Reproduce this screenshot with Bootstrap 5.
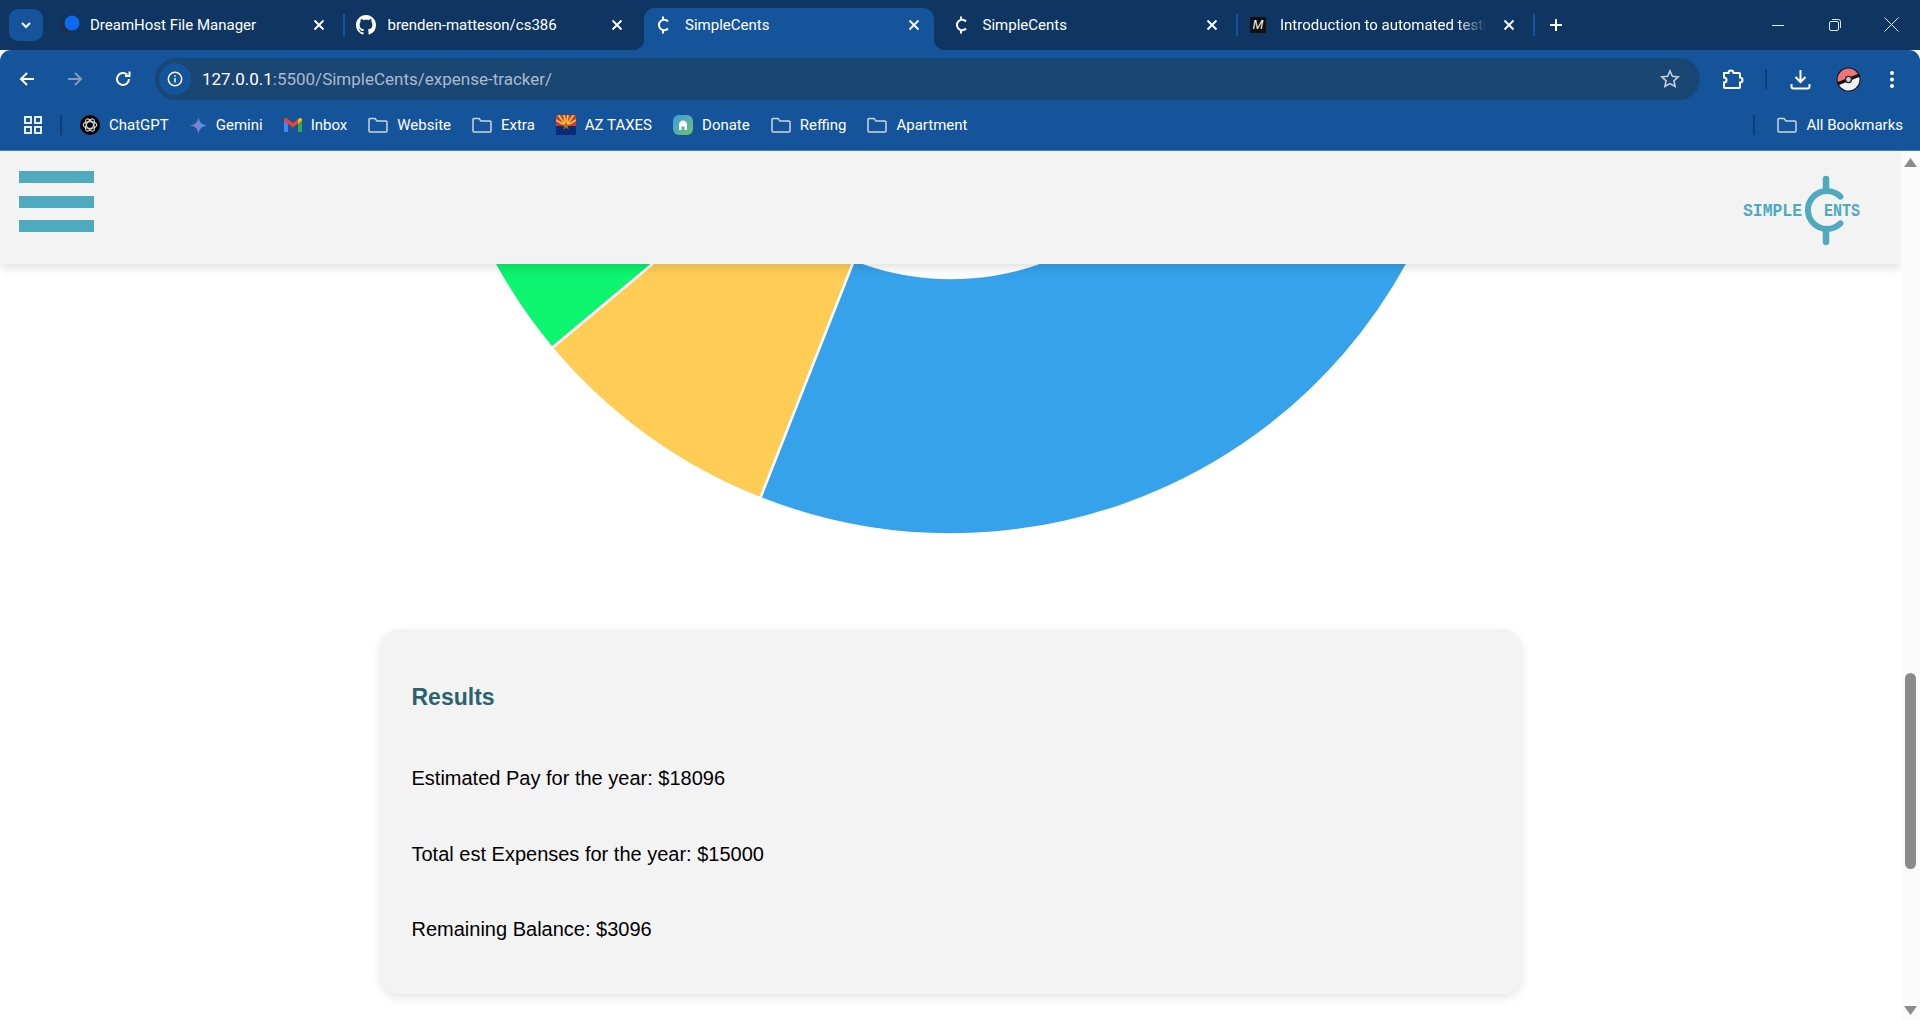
<!DOCTYPE html>
<html lang="en">
<head>
  <meta charset="UTF-8" />
  <title>SimpleCents</title>
  <link href="https://cdn.jsdelivr.net/npm/bootstrap@5.3.2/dist/css/bootstrap.min.css" rel="stylesheet" />
  <style>
    body { height: 1020px; overflow: hidden; background: #fff; font-family: "Liberation Sans", Arial, sans-serif; }

    /* browser chrome */
    .tab-strip { height: 50px; background: #0f3663; padding-left: 9px; color: #fff; font: 15px Roboto, sans-serif; }
    .tab-search { width: 34px; height: 32px; margin-top: 9px; margin-right: 6px; background: #15549a; border-radius: 9px; }
    .chrome-tab { width: 290px; height: 42px; margin-top: 8px; margin-right: 7.5px; padding: 0 14px 8px 11px; position: relative; flex: none; }
    .chrome-tab.now { background: #15549a; border-radius: 11px 11px 0 0; }
    .chrome-tab.now::before, .chrome-tab.now::after { content: ""; position: absolute; bottom: 0; width: 11px; height: 11px; }
    .chrome-tab.now::before { left: -11px; background: radial-gradient(circle at 0 0, transparent 11px, #15549a 11.5px); }
    .chrome-tab.now::after { right: -11px; background: radial-gradient(circle at 100% 0, transparent 11px, #15549a 11.5px); }
    .tab-ico { width: 16px; height: 20px; margin-right: 14px; flex: none; overflow: visible; }
    .tab-title { flex: 1; min-width: 0; white-space: nowrap; overflow: hidden; }
    .tab-title.fades { margin-right: 16px; -webkit-mask-image: linear-gradient(90deg, #000 85%, transparent 100%); mask-image: linear-gradient(90deg, #000 85%, transparent 100%); }
    .tab-x { flex: none; }
    .tab-sep { width: 2px; height: 22px; background: #15549a; margin: 14px 1.5px 0 -3.5px; flex: none; }
    .m-icon { width: 16px; height: 16px; margin-right: 14px; flex: none; background: #111; color: #fff; font: italic 13px/16px "Liberation Sans", sans-serif; text-align: center; }
    .plus-sign { margin: 17px 0 0 11.5px; }
    .win-ctrls { margin-left: auto; }
    .win-btn { width: 57px; height: 49px; }

    .tool-area { background: #15549a; height: 101px; border-radius: 11px 11px 0 0; border-bottom: 1px solid #4a7ab5; color: #fff; }
    .nav-row { padding: 8px 0 0 3px; height: 50px; }
    .tool-slot { width: 48px; height: 42px; }
    .tool-slot.tight { width: 36px; }
    .addr { width: 1545px; height: 42px; margin-left: 8px; background: #1a4674; border-radius: 21px; padding: 0 20px 0 4px; font: 17px Roboto, sans-serif; }
    .info-dot { width: 32px; height: 32px; background: #15549a; border-radius: 50%; margin-right: 11px; }
    .addr-dim { color: #a9bbd0; }
    .after-addr { margin-left: 15px; }
    .tool-sep { width: 2px; height: 20px; background: #0f3f7a; margin: 0 15px 0 14px; }
    .ball-slot { margin-left: 12px; }
    .menu-slot { margin-left: 8px; }

    .mark-row { height: 50px; padding-left: 24px; padding-right: 17px; font: 15px Roboto, sans-serif; gap: 21px; }
    .mark-item { gap: 9px; white-space: nowrap; }
    .mark-sep { width: 2px; height: 20px; background: #0f3f7a; margin: 0 -3px 0 -3px; }
    .mark-end { margin-left: auto; gap: 22px; }
    .mark-end .mark-sep { margin: 0; }

    /* page */
    .page-wrap { height: 869px; }
    .page-main { flex: 1; min-width: 0; overflow: hidden; }
    .top-head { height: 113px; background: #f3f3f3; box-shadow: 0 4px 10px rgba(0, 0, 0, 0.12); position: relative; z-index: 2; padding: 20px 40px 0 19px; }
    .burger { gap: 12.5px; }
    .burger span { display: block; width: 75px; height: 12px; background: #4fa9bf; }
    .logo-text { font: bold 18px "Liberation Mono", monospace; fill: #4fa9bf; }
    .chart-box { display: block; width: 100%; height: 271px; }
    .result-card { width: 1142px; margin: 94px auto 0; padding: 54px 32px 0; background: #f3f3f3; border: 0; border-radius: 20px; box-shadow: 0 4px 10px rgba(0, 0, 0, 0.1); height: 365px; }
    .result-title { font: bold 23px/28px "Liberation Sans", sans-serif; color: #2a6272; margin-bottom: 55px; }
    .result-line { font: 20px/24px "Liberation Sans", sans-serif; color: #000; margin-bottom: 51.5px; }

    .scroll-rail { width: 19px; background: #fbfbfb; padding: 7px 0 5px; }
    .scroll-thumb { width: 11px; height: 196px; background: #8b8b8b; border-radius: 6px; margin-top: 506px; }
  </style>
</head>
<body class="d-flex flex-column">

  <div class="tab-strip d-flex align-items-start">
    <div class="tab-search d-flex align-items-center justify-content-center">
      <svg width="12" height="12" viewBox="0 0 12 12" fill="none" stroke="#fff" stroke-width="2"><path d="M2 4l4 4 4-4"/></svg>
    </div>
    <div class="chrome-tab d-flex align-items-center">
      <svg class="tab-ico" viewBox="0 0 16 20"><circle cx="7.500" cy="11" r="8" fill="#1d2f4a"/><circle cx="12" cy="8" r="7.500" fill="#0a6bf0"/></svg>
      <span class="tab-title">DreamHost File Manager</span>
      <svg class="tab-x" width="12" height="12" viewBox="0 0 12 12" stroke="#fff" stroke-width="1.8"><path d="M1.500 1.500l9 9M10.500 1.500l-9 9"/></svg>
    </div>
    <div class="tab-sep"></div>
    <div class="chrome-tab d-flex align-items-center">
      <svg class="tab-ico" viewBox="0 0 16 20" fill="#fff"><path transform="translate(-2 0) scale(1.250)" d="M8 0C3.580 0 0 3.580 0 8c0 3.540 2.290 6.530 5.470 7.590.4.070.55-.17.55-.38 0-.19-.01-.82-.01-1.490-2.010.37-2.530-.49-2.690-.94-.09-.23-.48-.94-.82-1.130-.28-.15-.68-.52-.01-.53.63-.01 1.080.58 1.230.82.72 1.210 1.870.87 2.330.66.07-.52.28-.87.51-1.070-1.780-.2-3.640-.89-3.640-3.950 0-.87.31-1.590.82-2.150-.08-.2-.36-1.020.08-2.120 0 0 .67-.21 2.200.82.64-.18 1.320-.27 2-.27.68 0 1.360.09 2 .27 1.530-1.040 2.200-.82 2.200-.82.44 1.100.16 1.920.08 2.120.51.56.82 1.270.82 2.150 0 3.070-1.870 3.750-3.650 3.950.29.25.54.73.54 1.480 0 1.070-.01 1.930-.01 2.200 0 .21.15.46.55.38A8.013 8.013 0 0016 8c0-4.420-3.580-8-8-8z"/></svg>
      <span class="tab-title">brenden-matteson/cs386</span>
      <svg class="tab-x" width="12" height="12" viewBox="0 0 12 12" stroke="#fff" stroke-width="1.8"><path d="M1.500 1.500l9 9M10.500 1.500l-9 9"/></svg>
    </div>
    <div class="chrome-tab now d-flex align-items-center">
      <svg class="tab-ico" viewBox="0 0 16 20" fill="none" stroke="#fff" stroke-width="2"><path d="M13 6.500a5.200 5.200 0 1 0 0 7M8 1.500v3M8 15.500v3"/></svg>
      <span class="tab-title">SimpleCents</span>
      <svg class="tab-x" width="12" height="12" viewBox="0 0 12 12" stroke="#fff" stroke-width="1.8"><path d="M1.500 1.500l9 9M10.500 1.500l-9 9"/></svg>
    </div>
    <div class="chrome-tab d-flex align-items-center">
      <svg class="tab-ico" viewBox="0 0 16 20" fill="none" stroke="#fff" stroke-width="2"><path d="M13 6.500a5.200 5.200 0 1 0 0 7M8 1.500v3M8 15.500v3"/></svg>
      <span class="tab-title">SimpleCents</span>
      <svg class="tab-x" width="12" height="12" viewBox="0 0 12 12" stroke="#fff" stroke-width="1.8"><path d="M1.500 1.500l9 9M10.500 1.500l-9 9"/></svg>
    </div>
    <div class="tab-sep"></div>
    <div class="chrome-tab d-flex align-items-center">
      <div class="m-icon">M</div>
      <span class="tab-title fades">Introduction to automated testing</span>
      <svg class="tab-x" width="12" height="12" viewBox="0 0 12 12" stroke="#fff" stroke-width="1.8"><path d="M1.500 1.500l9 9M10.500 1.500l-9 9"/></svg>
    </div>
    <div class="tab-sep"></div>
    <svg class="plus-sign" width="16" height="16" viewBox="0 0 16 16" stroke="#fff" stroke-width="2"><path d="M8 2v12M2 8h12"/></svg>
    <div class="win-ctrls d-flex">
      <div class="win-btn d-flex align-items-center justify-content-center">
        <svg width="14" height="14" viewBox="0 0 14 14" stroke="#dfe7f1"><path d="M1 7.500h12"/></svg>
      </div>
      <div class="win-btn d-flex align-items-center justify-content-center">
        <svg width="14" height="14" viewBox="0 0 14 14" fill="none" stroke="#dfe7f1"><rect x="1.500" y="3.500" width="9" height="9" rx="1.500"/><path d="M4 1.500h6.500a2 2 0 0 1 2 2V10"/></svg>
      </div>
      <div class="win-btn d-flex align-items-center justify-content-center">
        <svg width="15" height="15" viewBox="0 0 15 15" stroke="#dfe7f1"><path d="M.5.500l14 14M14.500.500l-14 14"/></svg>
      </div>
    </div>
  </div>

  <div class="tool-area">
    <div class="nav-row d-flex align-items-start">
      <div class="tool-slot d-flex align-items-center justify-content-center">
        <svg width="18" height="18" viewBox="0 0 18 18" fill="none" stroke="#fff" stroke-width="2"><path d="M16 9H3M9 3L3 9l6 6"/></svg>
      </div>
      <div class="tool-slot d-flex align-items-center justify-content-center">
        <svg width="18" height="18" viewBox="0 0 18 18" fill="none" stroke="#7d9dc4" stroke-width="2"><path d="M2 9h13M9 3l6 6-6 6"/></svg>
      </div>
      <div class="tool-slot d-flex align-items-center justify-content-center">
        <svg width="18" height="18" viewBox="0 0 18 18" fill="none" stroke="#fff" stroke-width="2"><path d="M15 9a6 6 0 1 1-1.800-4.300"/><path d="M15.500 1.500V6H11"/></svg>
      </div>
      <div class="addr d-flex align-items-center">
        <div class="info-dot d-flex align-items-center justify-content-center">
          <svg width="16" height="16" viewBox="0 0 16 16" fill="none" stroke="#fff" stroke-width="1.500"><circle cx="8" cy="8" r="6.700"/><path d="M8 7v4.500M8 4.200v1.500"/></svg>
        </div>
        <span>127.0.0.1<span class="addr-dim">:5500/SimpleCents/expense-tracker/</span></span>
        <svg class="ms-auto" width="20" height="20" viewBox="0 0 20 20" fill="none" stroke="#c5d0dd" stroke-width="1.600"><path d="M10 2l2.400 5.300 5.800.600-4.300 3.900 1.200 5.700-5.100-2.900-5.100 2.900 1.200-5.700-4.300-3.900 5.800-.600z"/></svg>
      </div>
      <div class="tool-slot tight after-addr d-flex align-items-center justify-content-center">
        <svg width="22" height="21" viewBox="0 0 22 21" fill="none" stroke="#fff" stroke-width="2"><path d="M2 4h4.500a2.500 2.500 0 0 1 5 0H17a1 1 0 0 1 1 1v3.500a2.500 2.500 0 0 1 0 5V18a1 1 0 0 1-1 1H3a1 1 0 0 1-1-1v-4.500a2.500 2.500 0 0 0 0-5z"/></svg>
      </div>
      <div class="tool-sep align-self-center"></div>
      <div class="tool-slot tight d-flex align-items-center justify-content-center">
        <svg width="21" height="21" viewBox="0 0 21 21" fill="none" stroke="#fff" stroke-width="2"><path d="M10.500 1v12M5.500 8l5 5 5-5M1.500 15v2.500a2 2 0 0 0 2 2h14a2 2 0 0 0 2-2V15"/></svg>
      </div>
      <div class="tool-slot tight ball-slot d-flex align-items-center justify-content-center">
        <svg width="25" height="25" viewBox="0 0 24 24"><circle cx="12" cy="12" r="11.500" fill="#111"/><g transform="rotate(-22 12 12)"><path d="M1.600 10.500a10.500 10.500 0 0 1 20.800 0z" fill="#f0737a"/><path d="M1.600 13.500h20.800a10.500 10.500 0 0 1-20.800 0z" fill="#f2f2f2"/></g><circle cx="12" cy="12" r="3.500" fill="#222"/><circle cx="12" cy="12" r="2.300" fill="#ccc"/></svg>
      </div>
      <div class="tool-slot tight menu-slot d-flex align-items-center justify-content-center">
        <svg width="6" height="19" viewBox="0 0 6 19" fill="#fff"><circle cx="3" cy="3" r="2"/><circle cx="3" cy="9.500" r="2"/><circle cx="3" cy="16" r="2"/></svg>
      </div>
    </div>

    <div class="mark-row d-flex align-items-center">
      <svg width="18" height="18" viewBox="0 0 18 18" fill="none" stroke="#fff" stroke-width="1.800"><rect x="1" y="1" width="6" height="6"/><rect x="11" y="1" width="6" height="6"/><rect x="1" y="11" width="6" height="6"/><rect x="11" y="11" width="6" height="6"/></svg>
      <div class="mark-sep"></div>
      <div class="mark-item d-flex align-items-center">
        <svg width="20" height="20" viewBox="0 0 20 20" fill="none"><circle cx="10" cy="10" r="10" fill="#000"/><g stroke="#d8d8d8" stroke-width="1.100"><ellipse cx="10" cy="10" rx="6.800" ry="3.400"/><ellipse cx="10" cy="10" rx="6.800" ry="3.400" transform="rotate(60 10 10)"/><ellipse cx="10" cy="10" rx="6.800" ry="3.400" transform="rotate(120 10 10)"/></g></svg>
        <span>ChatGPT</span>
      </div>
      <div class="mark-item d-flex align-items-center">
        <svg width="17" height="17" viewBox="0 0 17 17"><defs><linearGradient id="gem" x1="0" y1="0.500" x2="1" y2="0.500"><stop offset="0" stop-color="#9a6cc0"/><stop offset="1" stop-color="#4a9df0"/></linearGradient></defs><path d="M8.500 0c.7 4.800 3 7.500 8.500 8.500C11.500 9.500 9.200 12.200 8.500 17c-.7-4.800-3-7.500-8.500-8.500C5.500 7.500 7.800 4.800 8.500 0z" fill="url(#gem)"/></svg>
        <span>Gemini</span>
      </div>
      <div class="mark-item d-flex align-items-center">
        <svg width="18" height="14" viewBox="0 0 18 14"><path d="M0 2v12h4V5z" fill="#4285f4"/><path d="M14 5v9h4V2z" fill="#34a853"/><path d="M0 1.500C0 0 1.800-.5 3 .5L9 5l6-4.500-1 5L9 9.500 0 3z" fill="#ea4335"/><path d="M14 5.500l4-3V2C18-.3 16.400-.4 15 .5l-1 .8z" fill="#fbbc04"/></svg>
        <span>Inbox</span>
      </div>
      <div class="mark-item d-flex align-items-center">
        <svg width="20" height="18" viewBox="0 0 20 18" fill="none" stroke="#cdd5df" stroke-width="1.500"><path d="M1 3.500a1 1 0 0 1 1-1h5l2 2.500h9a1 1 0 0 1 1 1v9a1 1 0 0 1-1 1H2a1 1 0 0 1-1-1z"/></svg>
        <span>Website</span>
      </div>
      <div class="mark-item d-flex align-items-center">
        <svg width="20" height="18" viewBox="0 0 20 18" fill="none" stroke="#cdd5df" stroke-width="1.500"><path d="M1 3.500a1 1 0 0 1 1-1h5l2 2.500h9a1 1 0 0 1 1 1v9a1 1 0 0 1-1 1H2a1 1 0 0 1-1-1z"/></svg>
        <span>Extra</span>
      </div>
      <div class="mark-item d-flex align-items-center">
        <svg width="20" height="20" viewBox="0 0 20 20"><rect width="20" height="11" fill="#d0392b"/><g stroke="#f6c344" stroke-width="1.700"><path d="M10 11L0 5M10 11L2.500 0M10 11L8 0M10 11L12 0M10 11L17.500 0M10 11L20 5"/></g><rect y="11" width="20" height="9" fill="#0b2a78"/><path d="M10 6l1.200 3.400 3.300.1-2.700 2 1 3.300-2.800-2-2.800 2 1-3.300-2.700-2 3.300-.1z" fill="#b5651d"/></svg>
        <span>AZ TAXES</span>
      </div>
      <div class="mark-item d-flex align-items-center">
        <svg width="20" height="20" viewBox="0 0 20 20"><defs><linearGradient id="don" x1="0" y1="0" x2="1" y2="1"><stop offset="0" stop-color="#3f9be8"/><stop offset="1" stop-color="#6fc26b"/></linearGradient></defs><rect width="20" height="20" rx="6" fill="url(#don)"/><path d="M10 5.500c2 0 4 2 4 4V15h-2.500v-3.500h-3V15H6V9.500c0-2 2-4 4-4z" fill="#fff"/></svg>
        <span>Donate</span>
      </div>
      <div class="mark-item d-flex align-items-center">
        <svg width="20" height="18" viewBox="0 0 20 18" fill="none" stroke="#cdd5df" stroke-width="1.500"><path d="M1 3.500a1 1 0 0 1 1-1h5l2 2.500h9a1 1 0 0 1 1 1v9a1 1 0 0 1-1 1H2a1 1 0 0 1-1-1z"/></svg>
        <span>Reffing</span>
      </div>
      <div class="mark-item d-flex align-items-center">
        <svg width="20" height="18" viewBox="0 0 20 18" fill="none" stroke="#cdd5df" stroke-width="1.500"><path d="M1 3.500a1 1 0 0 1 1-1h5l2 2.500h9a1 1 0 0 1 1 1v9a1 1 0 0 1-1 1H2a1 1 0 0 1-1-1z"/></svg>
        <span>Apartment</span>
      </div>
      <div class="mark-end d-flex align-items-center">
        <div class="mark-sep"></div>
        <div class="mark-item d-flex align-items-center">
          <svg width="20" height="18" viewBox="0 0 20 18" fill="none" stroke="#cdd5df" stroke-width="1.500"><path d="M1 3.500a1 1 0 0 1 1-1h5l2 2.500h9a1 1 0 0 1 1 1v9a1 1 0 0 1-1 1H2a1 1 0 0 1-1-1z"/></svg>
          <span>All Bookmarks</span>
        </div>
      </div>
    </div>
  </div>

  <div class="page-wrap d-flex">
    <div class="page-main">
      <header class="top-head d-flex justify-content-between align-items-start">
        <div class="burger d-flex flex-column">
          <span></span><span></span><span></span>
        </div>
        <svg width="118" height="75" viewBox="0 0 118 75" fill="none">
          <text class="logo-text" x="0" y="45" textLength="59" lengthAdjust="spacingAndGlyphs">SIMPLE</text>
          <path d="M97.400 25.600A19 19 0 1 0 97.400 52.400" stroke="#4fa9bf" stroke-width="6" stroke-linecap="round"/>
          <path d="M83 8v12M83 58v13" stroke="#4fa9bf" stroke-width="6.500" stroke-linecap="round"/>
          <text class="logo-text" x="81" y="45" textLength="36" lengthAdjust="spacingAndGlyphs">ENTS</text>
        </svg>
      </header>
      <svg class="chart-box" viewBox="0 0 1901 271">
        <g stroke="#fff" stroke-width="2.500" transform="translate(0 1)">
          <path d="M552 83A520 520 0 0 1 431 -250.500L687.500 -250.500A263.500 263.500 0 0 0 748.800 -81.500Z" fill="#0df46f"/>
          <path d="M760.300 233.200A520 520 0 0 1 552 83L748.800 -81.500A263.500 263.500 0 0 0 854.400 -5.400Z" fill="#ffcd56"/>
          <path d="M1471 -250.500A520 520 0 0 1 760.300 233.200L854.400 -5.400A263.500 263.500 0 0 0 1214.500 -250.500Z" fill="#36a2eb"/>
        </g>
      </svg>
      <div class="card result-card">
        <h3 class="result-title">Results</h3>
        <p class="result-line">Estimated Pay for the year: $18096</p>
        <p class="result-line">Total est Expenses for the year: $15000</p>
        <p class="result-line">Remaining Balance: $3096</p>
      </div>
    </div>
    <div class="scroll-rail d-flex flex-column align-items-center">
      <svg width="13" height="9" viewBox="0 0 13 9" fill="#8b8b8b"><path d="M6.500 0L13 9H0z"/></svg>
      <div class="scroll-thumb"></div>
      <svg class="mt-auto" width="13" height="9" viewBox="0 0 13 9" fill="#8b8b8b"><path d="M0 0h13L6.500 9z"/></svg>
    </div>
  </div>
</body>
</html>
